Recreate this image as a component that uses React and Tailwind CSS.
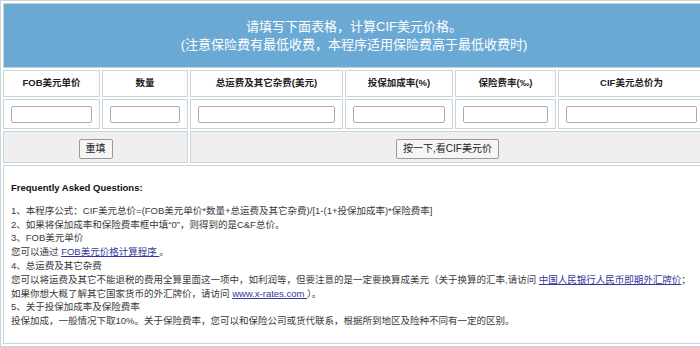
import React from 'react';

const cols = [
    { label: 'FOB美元单价', w: 'w-[97px]' },
    { label: '数量', w: 'w-[86px]' },
    { label: '总运费及其它杂费(美元)', w: 'w-[153px]' },
    { label: '投保加成率(%)', w: 'w-[108px]' },
    { label: '保险费率(‰)', w: 'w-[101px]' },
    { label: 'CIF美元总价为', w: 'w-[147px]' },
];

const cell = 'border border-[#c6d5dc]';
const link = 'text-[#34379c] underline';

const App = () => {
    return (
        <div className="w-[700px] h-[347px] overflow-hidden bg-white" style={{ fontFamily: '"Liberation Sans", Arial, "Noto Sans CJK SC", sans-serif' }}>
            <table className="table-fixed w-[708px] border-separate border-spacing-[2px] border border-[#c6d5dc]">
                <colgroup>
                    {cols.map((c) => (
                        <col key={c.label} className={c.w} />
                    ))}
                </colgroup>
                <tbody>
                    <tr>
                        <td colSpan={6} className={`${cell} h-[65px] bg-[#6ba9d5] text-center text-white text-[13px] leading-[18px]`}>
                            请填写下面表格，计算CIF美元价格。<br />
                            (注意保险费有最低收费，本程序适用保险费高于最低收费时)
                        </td>
                    </tr>

                    {/* column headers */}
                    <tr>
                        {cols.map((c) => (
                            <th key={c.label} className={`${cell} h-[27px] p-0 text-center text-[9.5px] font-bold text-[#222]`}>
                                {c.label}
                            </th>
                        ))}
                    </tr>

                    <tr>
                        {cols.map((c) => (
                            <td key={c.label} className={`${cell} h-[30px] px-[7px] py-0`}>
                                <input type="text" className="block w-full h-[17px] bg-white border border-[#aaaaaa] rounded-[2px] outline-none" />
                            </td>
                        ))}
                    </tr>

                    <tr>
                        <td colSpan={2} className={`${cell} h-[32px] bg-[#efefef] text-center`}>
                            <button className="h-[20px] px-[6px] bg-[#f5f5f5] border border-[#9a9a9a] rounded-[2px] text-[10px] text-[#222] leading-none">
                                重填
                            </button>
                        </td>
                        <td colSpan={4} className={`${cell} h-[32px] bg-[#efefef] text-center`}>
                            <button className="h-[20px] px-[6px] bg-[#f5f5f5] border border-[#9a9a9a] rounded-[2px] text-[10px] text-[#222] leading-none">
                                按一下,看CIF美元价
                            </button>
                        </td>
                    </tr>

                    {/* FAQ */}
                    <tr>
                        <td colSpan={6} className={`${cell} h-[179px] align-top pl-[7px] pt-[15px] text-[9.5px] leading-[13.8px] text-[#3a3a3a]`}>
                            <p className="font-bold text-[#111]">Frequently Asked Questions:</p>
                            <div className="mt-[9px]">
                                <p>1、本程序公式：CIF美元总价=(FOB美元单价*数量+总运费及其它杂费)/[1-(1+投保加成率)*保险费率]</p>
                                <p>2、如果将保加成率和保险费率框中填“0”，则得到的是C&amp;F总价。</p>
                                <p>3、FOB美元单价</p>
                                <p>您可以通过 <span className={link}>FOB美元价格计算程序 </span>。</p>
                                <p>4、总运费及其它杂费</p>
                                <p className="whitespace-nowrap">您可以将运费及其它不能退税的费用全算里面这一项中，如利润等，但要注意的是一定要换算成美元（关于换算的汇率,请访问 <span className={link}>中国人民银行人民币即期外汇牌价</span>；</p>
                                <p>如果你想大概了解其它国家货币的外汇牌价，请访问 <span className={link}>www.x-rates.com </span>）。</p>
                                <p>5、关于投保加成率及保险费率</p>
                                <p>投保加成，一般情况下取10%。关于保险费率，您可以和保险公司或货代联系，根据所到地区及险种不同有一定的区别。</p>
                            </div>
                        </td>
                    </tr>
                </tbody>
            </table>
        </div>
    );
};

export default App;
